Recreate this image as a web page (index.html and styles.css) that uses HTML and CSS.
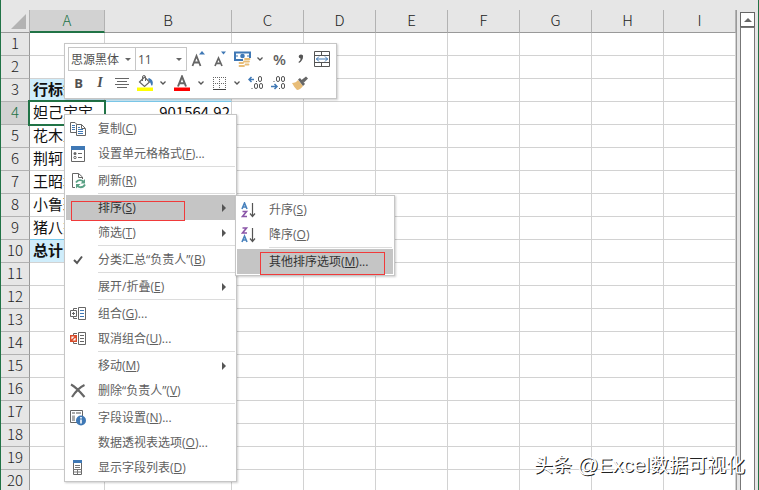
FILE: index.html
```html
<!DOCTYPE html>
<html lang="zh-CN">
<head>
<meta charset="utf-8">
<title>数据透视表</title>
<link rel="stylesheet" href="styles.css">
</head>
<body>
<main class="window">
<table class="sheet">
<colgroup><col class="col-num"><col class="col-a"><col class="col-b"><col class="col"><col class="col"><col class="col"><col class="col"><col class="col"><col class="col"><col></colgroup>
<thead><tr><th class="corner"><svg width="15" height="15" viewBox="0 0 15 15"><path d="M15 0V15H0Z" fill="#b3b3b3"/></svg></th><th class="on">A</th><th>B</th><th>C</th><th>D</th><th>E</th><th>F</th><th>G</th><th>H</th><th>I</th></tr></thead>
<tbody>
<tr><th>1</th><td></td><td></td><td></td><td></td><td></td><td></td><td></td><td></td><td></td></tr>
<tr><th>2</th><td></td><td></td><td></td><td></td><td></td><td></td><td></td><td></td><td></td></tr>
<tr class="pivot-head"><th>3</th><td>行标签</td><td></td><td></td><td></td><td></td><td></td><td></td><td></td><td></td></tr>
<tr><th class="on">4</th><td class="active">妲己宝宝</td><td class="num">901564.92</td><td></td><td></td><td></td><td></td><td></td><td></td><td></td></tr>
<tr><th>5</th><td>花木兰</td><td></td><td></td><td></td><td></td><td></td><td></td><td></td><td></td></tr>
<tr><th>6</th><td>荆轲</td><td></td><td></td><td></td><td></td><td></td><td></td><td></td><td></td></tr>
<tr><th>7</th><td>王昭君</td><td></td><td></td><td></td><td></td><td></td><td></td><td></td><td></td></tr>
<tr><th>8</th><td>小鲁班</td><td></td><td></td><td></td><td></td><td></td><td></td><td></td><td></td></tr>
<tr class="pivot-last"><th>9</th><td>猪八戒</td><td></td><td></td><td></td><td></td><td></td><td></td><td></td><td></td></tr>
<tr class="pivot-total"><th>10</th><td>总计</td><td></td><td></td><td></td><td></td><td></td><td></td><td></td><td></td></tr>
<tr><th>11</th><td></td><td></td><td></td><td></td><td></td><td></td><td></td><td></td><td></td></tr>
<tr><th>12</th><td></td><td></td><td></td><td></td><td></td><td></td><td></td><td></td><td></td></tr>
<tr><th>13</th><td></td><td></td><td></td><td></td><td></td><td></td><td></td><td></td><td></td></tr>
<tr><th>14</th><td></td><td></td><td></td><td></td><td></td><td></td><td></td><td></td><td></td></tr>
<tr><th>15</th><td></td><td></td><td></td><td></td><td></td><td></td><td></td><td></td><td></td></tr>
<tr><th>16</th><td></td><td></td><td></td><td></td><td></td><td></td><td></td><td></td><td></td></tr>
<tr><th>17</th><td></td><td></td><td></td><td></td><td></td><td></td><td></td><td></td><td></td></tr>
<tr><th>18</th><td></td><td></td><td></td><td></td><td></td><td></td><td></td><td></td><td></td></tr>
<tr><th>19</th><td></td><td></td><td></td><td></td><td></td><td></td><td></td><td></td><td></td></tr>
<tr><th>20</th><td></td><td></td><td></td><td></td><td></td><td></td><td></td><td></td><td></td></tr>
</tbody>
</table>
<div class="scrollbar">
<button class="scroll-up" aria-label="向上滚动"><svg width="8" height="4" viewBox="0 0 8 4"><path d="M4 0L8 4H0Z" fill="#666"/></svg></button>
<div class="track"></div>
</div>
</main>

<div class="toolbar popup">
<div class="bar-row top">
<label class="pick"><select aria-label="字体"><option>思源黑体</option></select></label>
<label class="pick size"><select aria-label="字号"><option>11</option></select></label>
<button aria-label="增大字号"><svg width="16" height="18" viewBox="0 0 16 18"><path d="M2.500 16L6.500 6L10.500 16M4 12.500H9" fill="none" stroke="#666" stroke-width="1.800"/><path d="M9 4.500L12 1L15 4.500Z" fill="#3f78b5"/></svg></button>
<button aria-label="减小字号"><svg width="16" height="18" viewBox="0 0 16 18"><path d="M3 16L6.500 8L10 16M4.300 13.300H8.700" fill="none" stroke="#666" stroke-width="1.700"/><path d="M9 1.500H14L11.500 4.500Z" fill="#3f78b5"/></svg></button>
<button aria-label="会计数字格式"><svg width="17" height="17" viewBox="0 0 17 17"><path d="M1 1.500H16V9H1Z" fill="#fff" stroke="#3f78b5" stroke-width="2"/><circle cx="8.500" cy="5" r="2.300" fill="#3f78b5"/><path d="M2 5H4M13 5H15" stroke="#3f78b5"/><path d="M9 7H17V16H4V10.500H9Z" fill="#fff"/><path d="M11 8H15.500M10 10.500H15M5.500 12H9M5.500 15H10M11.500 13.500H14.500" stroke="#e8bd78" stroke-width="1.800" stroke-linecap="round"/></svg></button>
<button aria-label="货币选项"><svg class="chev" width="6" height="4" viewBox="0 0 6 4"><path d="M.5.5L3 3L5.500.5" fill="none" stroke="#555" stroke-width="1.300"/></svg></button>
<button class="percent">%</button>
<button aria-label="千位分隔"><svg width="6" height="10" viewBox="0 0 6 10"><path d="M1 1.500Q3-.5 5 1.500Q5.500 6 1 9L.5 8Q3 6 2.500 4.500Q0 4 1 1.500" fill="#555"/></svg></button>
<button aria-label="合并后居中"><svg width="16" height="16" viewBox="0 0 16 16"><path d="M.5.5H15.500V15.500H.5ZM.5 4.500H15.500M.5 11.500H15.500M7.500 .5V4M7.500 12V15" fill="none" stroke="#555"/><path d="M2 8H14M5 5.500L2.500 8L5 10.500M11 5.500L13.500 8L11 10.500" fill="none" stroke="#3f78b5"/></svg></button>
</div>
<div class="bar-row bottom">
<button class="bold">B</button>
<button class="italic">I</button>
<button aria-label="居中"><svg width="14" height="11" viewBox="0 0 14 11"><path d="M0 .5H14M2 3.500H12M0 6.500H14M2 9.500H12" stroke="#666"/></svg></button>
<button aria-label="填充颜色"><svg width="17" height="17" viewBox="0 0 17 17"><path d="M2.500 7L7.500 2L12.500 7L7.500 11.500Z" fill="#fff" stroke="#666" stroke-width="1.200"/><path d="M5.500 6V2Q5.500.5 7 .5Q8.500.5 8.500 2V6" fill="none" stroke="#666"/><path d="M12 3Q17 5 15.500 10Q14.500 12 13.500 8L11 4Z" fill="#3f78b5"/><path d="M0 12.500H16V16H0Z" fill="#ff0"/></svg></button>
<button aria-label="填充颜色选项"><svg class="chev" width="6" height="4" viewBox="0 0 6 4"><path d="M.5.5L3 3L5.500.5" fill="none" stroke="#555" stroke-width="1.300"/></svg></button>
<button aria-label="字体颜色"><svg width="16" height="17" viewBox="0 0 16 17"><path d="M4 11.500L8 1.500L12 11.500M5.200 8.300H10.800" fill="none" stroke="#666" stroke-width="2"/><path d="M0 12.500H16V16H0Z" fill="#f00"/></svg></button>
<button aria-label="字体颜色选项"><svg class="chev" width="6" height="4" viewBox="0 0 6 4"><path d="M.5.5L3 3L5.500.5" fill="none" stroke="#555" stroke-width="1.300"/></svg></button>
<button aria-label="边框"><svg width="13" height="13" viewBox="0 0 13 13"><path d="M0 .5H13M0 6.500H13M.5 0V12M6.500 0V12M12.500 0V12" stroke="#666" stroke-dasharray="1 1"/><path d="M0 12.500H13" stroke="#444"/></svg></button>
<button aria-label="边框选项"><svg class="chev" width="6" height="4" viewBox="0 0 6 4"><path d="M.5.5L3 3L5.500.5" fill="none" stroke="#555" stroke-width="1.300"/></svg></button>
<button aria-label="增加小数位数"><svg width="16" height="14" viewBox="0 0 16 14"><path d="M1 3.500H6M3.500 1L1 3.500L3.500 6" fill="none" stroke="#3f78b5" stroke-width="1.500"/><g fill="none" stroke="#555"><rect x="10.500" y=".5" width="3" height="5" rx="1.500"/><rect x="6.500" y="7.500" width="3" height="5" rx="1.500"/><rect x="11.500" y="7.500" width="3" height="5" rx="1.500"/><path d="M8 5.500H9M3.500 12.500H4.500"/></g></svg></button>
<button aria-label="减少小数位数"><svg width="16" height="14" viewBox="0 0 16 14"><path d="M1 10.500H7M4.500 8L7 10.500L4.500 13" fill="none" stroke="#3f78b5" stroke-width="1.500"/><g fill="none" stroke="#555"><rect x="6.500" y=".5" width="3" height="5" rx="1.500"/><rect x="11.500" y=".5" width="3" height="5" rx="1.500"/><rect x="11.500" y="7.500" width="3" height="5" rx="1.500"/><path d="M3.500 5.500H4.500M9 12.500H10"/></g></svg></button>
<button aria-label="格式刷"><svg width="17" height="15" viewBox="0 0 17 15"><path d="M0 7Q4 7 6 4L11 10Q8 14 5 14Q2 11 0 7Z" fill="#e8bd78"/><path d="M6 3.500L8 2L13 8L11 10ZM9.500 4L14 .5L16 2.500L12 6.500Z" fill="#666"/></svg></button>
</div>
</div>

<div class="menu popup" role="menu">
<button role="menuitem"><i><svg width="16" height="16" viewBox="0 0 16 16"><path d="M.5 1.500H5L7.500 4V11.500H.5Z" fill="#fff" stroke="#666"/><path d="M2 4.500H5M2 6.500H5M2 8.500H5" stroke="#3f78b5"/><path d="M6.500 3.500H11.500L15.500 7.500V14.500H6.500Z" fill="#fff" stroke="#666"/><path d="M11.500 3.500V7.500H15" fill="none" stroke="#666"/><path d="M8 6.500H10M8 8.500H13M8 10.500H13M8 12.500H13" stroke="#3f78b5"/></svg></i><span>复制(<u>C</u>)</span></button>
<button role="menuitem"><i><svg width="16" height="16" viewBox="0 0 16 16"><path d="M1.500 1V15.500H14.500V1" fill="#fff" stroke="#666"/><path d="M1 0H15V4H1Z" fill="#3f78b5"/><circle cx="5" cy="7.500" r="1.500" fill="#666"/><circle cx="5" cy="11.500" r="1.200" fill="none" stroke="#666"/><path d="M8 7.500H12M8 11.500H12" stroke="#666"/></svg></i><span>设置单元格格式(<u>F</u>)...</span></button>
<hr>
<button role="menuitem"><i><svg width="16" height="16" viewBox="0 0 16 16"><path d="M5 14.500H2.500V.5H8.500L12.500 4V6M8.500.5V4.500H12" fill="none" stroke="#666"/><path d="M6 9.500Q8 6 12 7.500L13.500 9M15 11.500Q13 15 9 14L7 12.500" fill="none" stroke="#5ba185" stroke-width="1.800"/><path d="M15 6V10.500H10.500ZM6 15.500V11H10.500Z" fill="#5ba185"/></svg></i><span>刷新(<u>R</u>)</span></button>
<hr>
<button role="menuitem" class="hot sort"><i></i><span>排序(<u>S</u>)</span><b></b></button>
<button role="menuitem"><i></i><span>筛选(<u>T</u>)</span><b></b></button>
<hr>
<button role="menuitem"><i><svg width="16" height="16" viewBox="0 0 16 16"><path d="M4 8L7 11L12 4.500" fill="none" stroke="#555" stroke-width="2"/></svg></i><span>分类汇总“负责人”(<u>B</u>)</span></button>
<hr>
<button role="menuitem"><i></i><span>展开/折叠(<u>E</u>)</span><b></b></button>
<hr>
<button role="menuitem"><i><svg width="16" height="16" viewBox="0 0 16 16"><path d="M8.500 1.500H15.500V13.500H8.500ZM7 2.500H3.500V4M3.500 11V12.500H7M.5 4.500H6.500V10.500H.5ZM2 7.500H5M3.500 6V9" fill="none" stroke="#666"/><path d="M10 4.500H14M10 7.500H14M10 10.500H14" stroke="#3f78b5"/></svg></i><span>组合(<u>G</u>)...</span></button>
<button role="menuitem"><i><svg width="16" height="16" viewBox="0 0 16 16"><path d="M8.500 1.500H15.500V13.500H8.500ZM7 2.500H3.500V4M3.500 11V12.500H7M10 4.500H14M10 7.500H14M10 10.500H14" fill="none" stroke="#666"/><path d="M.7 4.700H6.300V10.300H.7ZM1 10L6 5" fill="none" stroke="#d84b2a" stroke-width="1.400"/></svg></i><span>取消组合(<u>U</u>)...</span></button>
<hr>
<button role="menuitem"><i></i><span>移动(<u>M</u>)</span><b></b></button>
<button role="menuitem"><i><svg width="16" height="16" viewBox="0 0 16 16"><path d="M1 1.500Q6 4 14.500 14M14.500 2Q8 5 2 14" fill="none" stroke="#666" stroke-width="2.200"/></svg></i><span>删除“负责人”(<u>V</u>)</span></button>
<hr>
<button role="menuitem"><i><svg width="16" height="16" viewBox="0 0 16 16"><path d="M.5.5H12.500V12.500H.5Z" fill="#fff" stroke="#666"/><path d="M2 2H5V4H2ZM6 2H11V4H6ZM2 5.500H5V11H2Z" fill="#aaa"/><circle cx="11" cy="10.500" r="5" fill="#3f78b5"/><path d="M11 7V8.500M11 9.500V13.500" stroke="#fff" stroke-width="1.600"/></svg></i><span>字段设置(<u>N</u>)...</span></button>
<button role="menuitem"><i></i><span>数据透视表选项(<u>O</u>)...</span></button>
<button role="menuitem"><i><svg width="16" height="16" viewBox="0 0 16 16"><path d="M3.500 1V14.500H11.500V1" fill="#fff" stroke="#666"/><path d="M3 0H12V3H3Z" fill="#3f78b5"/><path d="M5 5.500H10M5 7.500H10M3 9.500H12M3 12H12M7.500 9V14" stroke="#777"/></svg></i><span>显示字段列表(<u>D</u>)</span></button>
</div>

<div class="submenu menu popup" role="menu">
<button role="menuitem"><i><svg width="16" height="16" viewBox="0 0 16 16"><path d="M1 7L3.500 1L6 7M2 5H5" fill="none" stroke="#4a83bd" stroke-width="1.600"/><path d="M1.500 9.500H5.500L1.500 14.500H6" fill="none" stroke="#8a55a8" stroke-width="1.600"/><path d="M11.500 1V14.500M9 11.500L11.500 14.500L14 11.500" fill="none" stroke="#555" stroke-width="1.200"/></svg></i><span>升序(<u>S</u>)</span></button>
<button role="menuitem"><i><svg width="16" height="16" viewBox="0 0 16 16"><path d="M1.500 1H5.500L1.500 6H6" fill="none" stroke="#8a55a8" stroke-width="1.600"/><path d="M1 15L3.500 9L6 15M2 13H5" fill="none" stroke="#4a83bd" stroke-width="1.600"/><path d="M11.500 1V14.500M9 11.500L11.500 14.500L14 11.500" fill="none" stroke="#555" stroke-width="1.200"/></svg></i><span>降序(<u>O</u>)</span></button>
<hr>
<button role="menuitem" class="hot more"><i></i><span>其他排序选项(<u>M</u>)...</span></button>
</div>
<div class="watermark">头条 <span>@Excel</span>数据可视化</div>
</body>
</html>
```
FILE: styles.css
```css
*, *::before, *::after { box-sizing: border-box; }
body {
  margin: 0;
  height: 100vh;
  overflow: hidden;
  position: relative;
  background: #e6e6e6;
  font-family: "Open Sans", "Noto Sans CJK SC", sans-serif;
  font-size: 12px;
  color: #606060;
}
svg { display: block; flex: none; }
button { border: 0; padding: 0; background: none; font: inherit; color: inherit; }

.window {
  display: flex;
  align-items: flex-start;
  height: 100vh;
  padding-top: 10px;
  border-left: 1px solid #217346;
  border-right: 1px solid #217346;
  overflow: hidden;
}
.sheet {
  flex: 1;
  width: 0;
  table-layout: fixed;
  border-collapse: separate;
  border-spacing: 0;
  border-right: 1px solid #999;
  font-family: "Noto Sans CJK SC", sans-serif;
  font-size: 15px;
  line-height: 20px;
  color: #111;
}
.col-num { width: 29px; }
.col-a { width: 75px; }
.col-b { width: 127px; }
.col { width: 72px; }
.sheet th, .sheet td {
  height: 23px;
  padding: 0 0 2px;
  border-right: 1px solid #d2d2d2;
  border-bottom: 1px solid #d2d2d2;
  white-space: nowrap;
}
.sheet th {
  background: #e6e6e6;
  font-weight: 300;
  color: #222;
  border-color: #b2b2b2;
}
.sheet tbody th { border-right-color: #999; }
.sheet thead th { border-bottom-color: #999; }
.sheet td { background: #fff; padding-left: 3px; }
.sheet th.on { background: #d2d2d2; color: #217346; }
.sheet thead th.on { border-bottom: 2px solid #217346; padding-bottom: 1px; }
.corner svg { margin: 3px 3px 0 auto; }
.sheet td.num { text-align: right; padding-right: 1px; }
.pivot-head td:nth-child(-n+3), .pivot-total td:nth-child(-n+3) {
  background: #cfedfb;
  font-weight: 700;
}
.pivot-head td:nth-child(-n+3), .pivot-last td:nth-child(-n+3) { border-bottom-color: #7cc9ea; }
.active { position: relative; }
.active::after {
  content: "";
  position: absolute;
  inset: -2px -2px -2px -2px;
  border: 2px solid #217346;
}

.scrollbar {
  width: 21px;
  align-self: stretch;
  padding: 2px 3px 0;
  display: flex;
  flex-direction: column;
}
.scroll-up {
  height: 15px;
  border: 1px solid #666;
  background: #fff;
  display: grid;
  place-items: center;
}
.track { flex: 1; background: #fff; border: 1px solid #777; border-bottom: 0; }

.popup {
  position: absolute;
  background: #fff;
  border: 1px solid #c6c6c6;
  box-shadow: 1px 1px 2px #0003;
}
.toolbar { left: 64px; top: 43px; padding: 3px; }
.bar-row { display: grid; height: 24px; align-items: center; }
.bar-row.top { grid-template-columns: 68px 51px 22px 22px 22px 14px 25px 18px 23px; }
.bar-row.bottom { grid-template-columns: 21px 22px 22px 25px 10px 28px 10px 26px 10px 28px 16px 28px; }
.bar-row button { display: flex; align-items: center; justify-content: center; height: 24px; }
.pick { position: relative; height: 24px; border: 1px solid #c6c6c6; }
.size { border-left: 0; }
.pick select {
  appearance: none;
  width: 100%;
  height: 22px;
  padding: 0 0 0 2px;
  border: 0;
  background: none;
  font: inherit;
  color: #505050;
}
.pick::after {
  content: "";
  position: absolute;
  right: 4px;
  top: 10px;
  border: 3px solid transparent;
  border-top-color: #666;
  border-bottom: 0;
}
.bar-row .percent { font-size: 15px; font-weight: 600; }
.bold { font-weight: 700; }
.bar-row .bold, .bar-row .italic { font-size: 13px; color: #505050; }
.bar-row .italic { font-family: "Liberation Serif", serif; font-size: 14px; font-style: italic; font-weight: 700; }

.menu { left: 64px; top: 114px; width: 173px; padding: 1px 0 1px 1px; }
.menu button {
  position: relative;
  display: flex;
  align-items: center;
  width: 100%;
  height: 25px;
  text-align: left;
  line-height: 24px;
  white-space: nowrap;
}
.menu i { width: 16px; margin: 0 12px 0 4px; }
.menu u { text-underline-offset: 1px; }
.menu b {
  margin: 0 10px 0 auto;
  border: 4px solid transparent;
  border-left-color: #555;
  border-right: 0;
}
.menu hr { margin: 0 1px 1px 32px; border: 0; border-top: 1px solid #dcdcdc; }
.menu .hot { background: #c5c5c5; color: #333; }
.submenu { left: 235px; top: 195px; width: 160px; padding: 1px; }
.hot::after { content: ""; position: absolute; border: 1px solid #f03a3a; }
.sort::after { left: 5px; top: 6px; width: 114px; height: 20px; }
.more::after { left: 23px; top: 3px; width: 125px; height: 23px; }

.watermark {
  position: absolute;
  right: 14px;
  bottom: 10px;
  font: 19px/28px "Liberation Sans", "Noto Sans CJK SC", sans-serif;
  color: #fff;
  text-shadow: 1px 1px 0 #222;
  white-space: nowrap;
}
.watermark span { font-size: 21px; }
```
